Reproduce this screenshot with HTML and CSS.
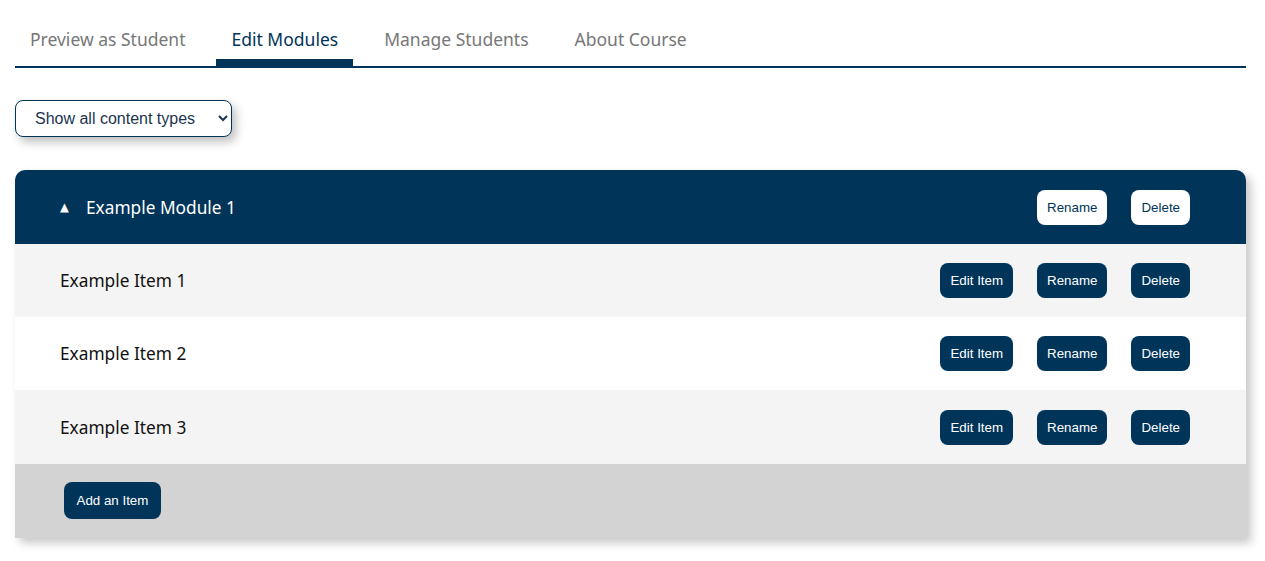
FILE: index.html
```html
<!DOCTYPE html>
<html lang="en">
<head>
<meta charset="utf-8">
<title>Edit Modules</title>
<link rel="stylesheet" href="styles.css">
</head>
<body>
<div class="page">
  <nav class="tabs">
    <a class="tab">Preview as Student</a>
    <a class="tab active">Edit Modules</a>
    <a class="tab">Manage Students</a>
    <a class="tab">About Course</a>
  </nav>

  <div class="filter">
    <select class="type-select">
      <option>Show all content types</option>
    </select>
  </div>

  <section class="module">
    <div class="module-head">
      <div class="module-title"><span class="caret">▲</span>Example Module 1</div>
      <div class="actions">
        <button class="btn btn-light">Rename</button>
        <button class="btn btn-light">Delete</button>
      </div>
    </div>
    <div class="item alt">
      <div class="item-name">Example Item 1</div>
      <div class="actions">
        <button class="btn">Edit Item</button>
        <button class="btn">Rename</button>
        <button class="btn">Delete</button>
      </div>
    </div>
    <div class="item">
      <div class="item-name">Example Item 2</div>
      <div class="actions">
        <button class="btn">Edit Item</button>
        <button class="btn">Rename</button>
        <button class="btn">Delete</button>
      </div>
    </div>
    <div class="item alt">
      <div class="item-name">Example Item 3</div>
      <div class="actions">
        <button class="btn">Edit Item</button>
        <button class="btn">Rename</button>
        <button class="btn">Delete</button>
      </div>
    </div>
    <div class="module-foot">
      <button class="btn btn-add">Add an Item</button>
    </div>
  </section>
</div>
</body>
</html>
```

FILE: styles.css
```css
* { box-sizing: border-box; }
html, body { margin: 0; padding: 0; background: #fff; }
body { font-family: "Noto Sans", "Open Sans", sans-serif; color: #111; }

.page { padding: 15px 19px 15px 15px; }

.tabs {
  display: flex;
  gap: 16px;
  padding-top: 12px;
  border-bottom: 2px solid #003459;
}
.tab {
  display: block;
  padding: 0 15px 1px;
  font-size: 17.5px;
  line-height: 24px;
  height: 39px;
  color: #777;
  border-bottom: 7px solid transparent;
  cursor: pointer;
}
.tab.active { color: #003459; border-bottom-color: #003459; }

.filter { padding-top: 32px; }
.type-select {
  width: 217px;
  height: 37px;
  padding: 0 10px 0 15px;
  font-family: "Liberation Sans", Arial, sans-serif;
  font-size: 16px;
  color: #1b3550;
  background: #fff;
  border: 1px solid #003459;
  border-radius: 8px;
  box-shadow: 4px 5px 10px rgba(0,0,0,0.25);
}

.module {
  margin-top: 33px;
  border-radius: 10px 10px 0 0;
  overflow: hidden;
  box-shadow: 5px 5px 10px rgba(0,0,0,0.22);
}
.module-head, .item {
  display: flex;
  align-items: center;
  justify-content: space-between;
  padding: 19px 56px 19px 45px;
}
.module-head { background: #003459; height: 74px; }
.item { background: #fff; height: 73px; }
.item.alt { background: #f4f4f4; }
.item:nth-of-type(4) { height: 74px; }

.module-title {
  color: #fff;
  font-size: 17.3px;
  display: flex;
  align-items: center;
}
.caret {
  font-family: "DejaVu Sans", sans-serif;
  font-size: 11.5px;
  width: 26px;
}
.item-name { font-size: 17.3px; color: #111; }

.actions { display: flex; gap: 24px; }
.btn {
  font-family: "Liberation Sans", Arial, sans-serif;
  font-size: 13.33px;
  line-height: 15px;
  height: 35px;
  padding: 0 10px;
  border: none;
  border-radius: 8px;
  background: #003459;
  color: #fff;
  cursor: pointer;
}
.btn-light { background: #fff; color: #003459; }

.module-foot {
  background: #d3d3d3;
  height: 74px;
  padding: 18px 49px;
}
.btn-add { height: 37px; padding: 0 12.5px; }
```
